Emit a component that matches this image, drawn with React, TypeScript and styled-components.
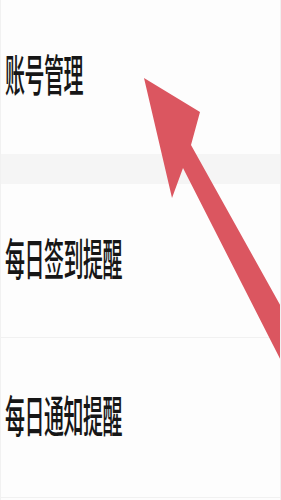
import React from 'react';
import styled, { createGlobalStyle } from 'styled-components';

const GlobalStyle = createGlobalStyle`
  html, body {
    margin: 0;
    padding: 0;
    background: #fdfdfd;
  }
  body {
    font-family: "Noto Sans CJK SC", "Noto Sans", sans-serif;
  }
`;

const Page = styled.div`
  position: relative;
  width: 281px;
  height: 500px;
  overflow: hidden;
  display: flex;
  flex-direction: column;
  background: #fdfdfd;
  border-left: 1px solid #f1f1f1;
  border-right: 1px solid #f1f1f1;
  box-sizing: border-box;
`;

const Row = styled.div<{ $height: number; $divider?: boolean }>`
  display: flex;
  align-items: center;
  height: ${({ $height }) => $height}px;
  padding: 0 0 6px 4px;
  box-sizing: border-box;
  border-bottom: ${({ $divider }) => ($divider ? '1px solid #f1f1f1' : 'none')};
  flex-shrink: 0;
`;

const Band = styled.div`
  height: 30px;
  background: #f5f5f5;
  flex-shrink: 0;
`;

const Label = styled.span`
  display: inline-block;
  font-size: 20px;
  font-weight: 500;
  line-height: 1;
  color: #161616;
  letter-spacing: -0.5px;
  transform: scaleY(2.2);
  transform-origin: center;
`;

const Arrow = styled.svg`
  position: absolute;
  left: 0;
  top: 0;
  pointer-events: none;
`;

const App: React.FC = () => {
  return (
    <>
      <GlobalStyle />
      <Page>
        <Row $height={154}>
          <Label>账号管理</Label>
        </Row>
        <Band />
        <Row $height={154} $divider>
          <Label>每日签到提醒</Label>
        </Row>
        <Row $height={160} $divider>
          <Label>每日通知提醒</Label>
        </Row>

        <Arrow width="281" height="500" viewBox="0 0 281 500">
          <polygon
            points="143,78 199,112 190,145 332,400 300,400 182,168 171,198"
            fill="#db5660"
          />
        </Arrow>
      </Page>
    </>
  );
};

export default App;
